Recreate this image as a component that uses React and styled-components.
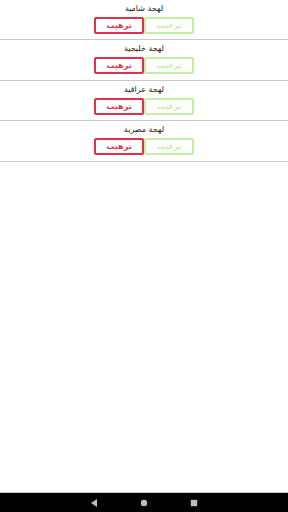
import styled, { createGlobalStyle } from "styled-components"

const Global = createGlobalStyle`
    html, body {
        margin: 0;
        padding: 0;
        background: #fff;
    }
`

const Screen = styled.div`
    display: flex;
    flex-direction: column;
    width: 288px;
    height: 512px;
    background: #fff;
    font-family: "DejaVu Sans", "Noto Sans", sans-serif;
`

const List = styled.div`
    flex: 1;
    display: flex;
    flex-direction: column;
`

const Row = styled.div`
    display: flex;
    flex-direction: column;
    align-items: center;
    height: 39.4px;
    border-bottom: 1px solid #c8c8c8;
    box-sizing: content-box;
`

const Title = styled.div`
    margin-top: 3px;
    height: 11px;
    line-height: 11px;
    font-size: 8px;
    color: #222;
    direction: rtl;
`

const Buttons = styled.div`
    display: flex;
    margin-top: 3px;
`

const Choice = styled.div`
    width: 50px;
    height: 17px;
    box-sizing: border-box;
    border: 2px solid ${p => p.color};
    border-radius: 2px;
    color: ${p => p.color};
    font-size: 8px;
    font-weight: bold;
    display: flex;
    align-items: center;
    justify-content: center;
    direction: rtl;
`

const NavBar = styled.div`
    height: 19px;
    background: #000;
    border-top: 1px solid #c4c4c4;
    display: flex;
    align-items: center;
    justify-content: center;
    gap: 40px;
`

const dialects = ["لهجة شامية", "لهجة خليجية", "لهجة عراقية", "لهجة مصرية"]

export default function App() {
    return (
        <Screen>
            <Global />
            <List>
                {dialects.map(d => (
                    <Row key={d}>
                        <Title>{d}</Title>
                        <Buttons>
                            <Choice color="#e2304b">ترهيب</Choice>
                            <Choice color="#c3efa4">ترغيب</Choice>
                        </Buttons>
                    </Row>
                ))}
            </List>
            <NavBar>
                <svg width="10" height="10" viewBox="0 0 10 10">
                    <path d="M8 1 L2 5 L8 9 Z" fill="#bdbdbd" />
                </svg>
                <svg width="10" height="10" viewBox="0 0 10 10">
                    <circle cx="5" cy="5" r="3.2" fill="#bdbdbd" />
                </svg>
                <svg width="10" height="10" viewBox="0 0 10 10">
                    <rect x="1.8" y="1.8" width="6.4" height="6.4" fill="#bdbdbd" />
                </svg>
            </NavBar>
        </Screen>
    )
}
